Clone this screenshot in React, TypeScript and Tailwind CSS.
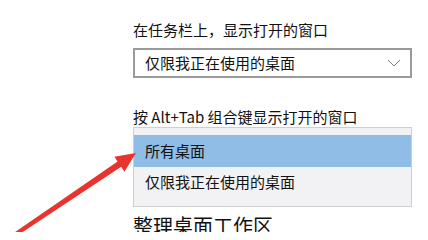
import React from 'react'

const cjk = { fontFamily: '"Noto Sans CJK SC", "Noto Sans", sans-serif' }

export default function App() {
  return (
    <div className="relative w-[428px] h-[232px] overflow-hidden bg-white" style={cjk}>
      <div className="flex flex-col pl-[133px] pt-[20px] w-[412px] box-content">
        <div className="text-[15px] leading-[20px] text-[#111]">在任务栏上，显示打开的窗口</div>
        <div className="mt-2 h-[30px] w-[279px] border-2 border-[#9a9a9a] flex items-center justify-between pl-[10px] pr-[8px]">
          <span className="text-[15px] leading-[20px] text-[#111]">仅限我正在使用的桌面</span>
          <svg width="14" height="8" viewBox="0 0 14 8" className="mr-[1px]">
            <path d="M1 1 L7 7 L13 1" fill="none" stroke="#7a7a7a" strokeWidth="1" />
          </svg>
        </div>
        <div className="mt-[29px] text-[15px] leading-[20px] text-[#111]">按 Alt+Tab 组合键显示打开的窗口</div>
        <div className="w-[279px] h-[80px] border border-[#cfcfcf] bg-[#f2f1f3] pt-[7px] flex flex-col">
          <div className="h-[32px] bg-[#8fbde6] flex items-center pl-[11px] text-[15px] text-[#111]">所有桌面</div>
          <div className="h-[31px] flex items-center pl-[11px] text-[15px] text-[#111]">仅限我正在使用的桌面</div>
        </div>
        <div className="mt-[6px] text-[20px] leading-[26px] text-[#111]">整理桌面工作区</div>
      </div>
      <svg className="absolute left-0 top-0" width="428" height="232" viewBox="0 0 428 232">
        <polygon
          points="8.9,236.3 117.6,161.5 114.4,156.7 136,153 124.4,171.7 121.2,166.8 11.1,239.7"
          fill="#e8332f"
        />
      </svg>
    </div>
  )
}
